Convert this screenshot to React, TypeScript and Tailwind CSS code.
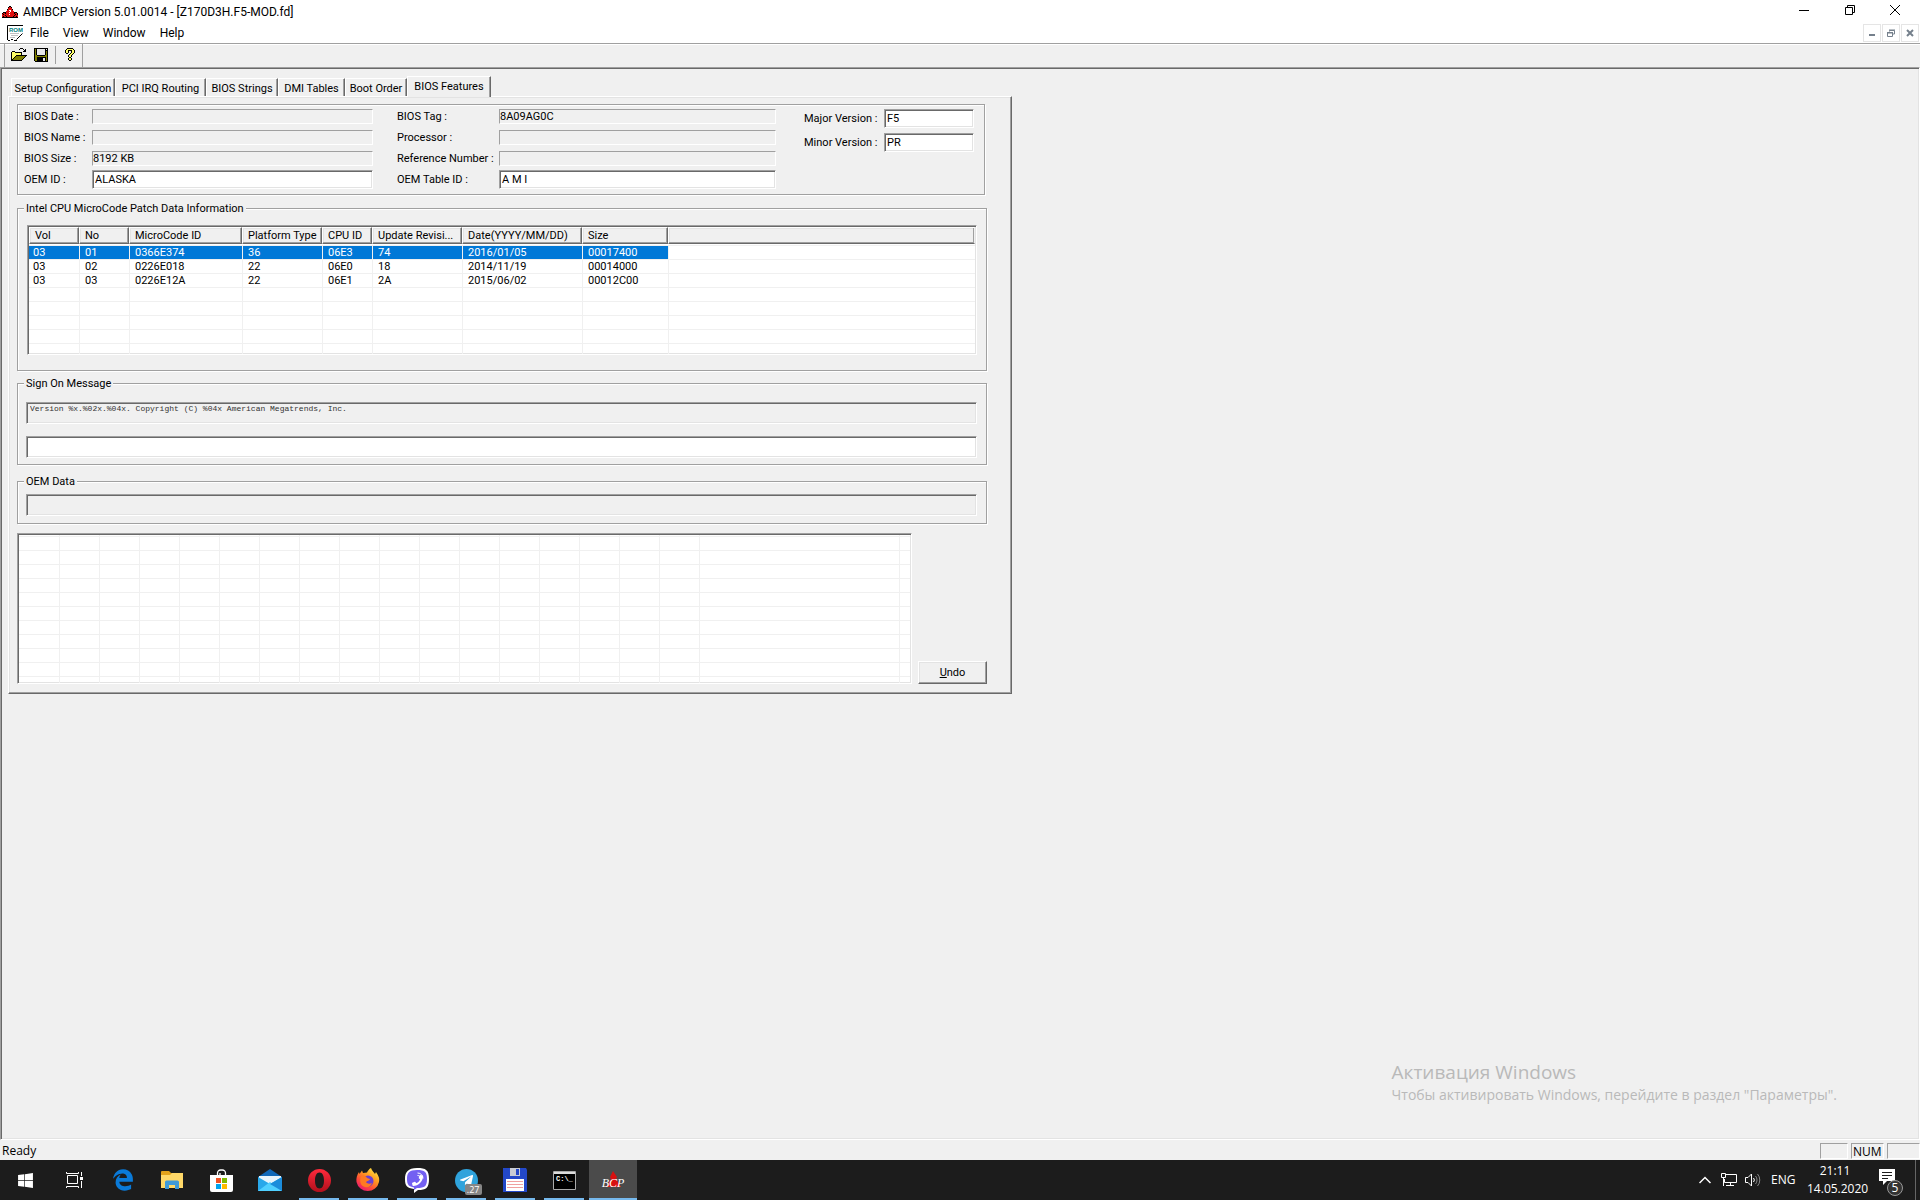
import React, { useState } from 'react';
import { FaEdgeLegacy, FaPhoneAlt, FaTelegramPlane, FaWindows } from 'react-icons/fa';

const sunken =
  'border border-t-[#a0a0a0] border-l-[#a0a0a0] border-r-white border-b-white shadow-[inset_1px_1px_0_#696969,inset_-1px_-1px_0_#e3e3e3]';
const raised =
  'border border-t-white border-l-white border-r-[#696969] border-b-[#696969] shadow-[inset_-1px_-1px_0_#a0a0a0,inset_1px_1px_0_#e3e3e3]';
const etched = 'border border-[#a0a0a0] shadow-[inset_1px_1px_0_#fff,1px_1px_0_#fff]';

const menus = ['File', 'View', 'Window', 'Help'];

const tabs = [
  { label: 'Setup Configuration', width: 'w-[104px]' },
  { label: 'PCI IRQ Routing', width: 'w-[91px]' },
  { label: 'BIOS Strings', width: 'w-[72px]' },
  { label: 'DMI Tables', width: 'w-[67px]' },
  { label: 'Boot Order', width: 'w-[62px]' },
  { label: 'BIOS Features', width: 'w-[84px]' },
];

const columns = [
  { label: 'Vol', width: 'w-[51px]' },
  { label: 'No', width: 'w-[50px]' },
  { label: 'MicroCode ID', width: 'w-[113px]' },
  { label: 'Platform Type', width: 'w-[80px]' },
  { label: 'CPU ID', width: 'w-[50px]' },
  { label: 'Update Revisi...', width: 'w-[90px]' },
  { label: 'Date(YYYY/MM/DD)', width: 'w-[120px]' },
  { label: 'Size', width: 'w-[86px]' },
  { label: '', width: '' },
];

const patches = [
  ['03', '01', '0366E374', '36', '06E3', '74', '2016/01/05', '00017400', ''],
  ['03', '02', '0226E018', '22', '06E0', '18', '2014/11/19', '00014000', ''],
  ['03', '03', '0226E12A', '22', '06E1', '2A', '2015/06/02', '00012C00', ''],
];

const emptyPatch = columns.map(() => '');

const palette: Record<string, string> = {
  X: '#000000',
  Y: '#ffff66',
  O: '#808000',
  G: '#e8e8e8',
  R: '#e01010',
  W: '#ffffff',
};

const openIcon = [
  '.........XXX....',
  '........X...X.X.',
  '.............XX.',
  '.XXX........XXX.',
  'XYYYXXXXXXX.....',
  'XYYYYYYYYYX.....',
  'XYYYYYYYYYX.....',
  'XYYYYXXXXXXXXXXX',
  'XYYYXOOOOOOOOOX.',
  'XYYXOOOOOOOOOX..',
  'XYXOOOOOOOOOX...',
  'XXOOOOOOOOOX....',
  'XXXXXXXXXXX.....',
];

const saveIcon = [
  'XXXXXXXXXXXXXX',
  'XOXGGGGGGGGXGX',
  'XOXGGGGGGGGXXX',
  'XOXGGGGGGGGXOX',
  'XOXGGGGGGGGXOX',
  'XOXGGGGGGGGXOX',
  'XOXGGGGGGGGXOX',
  'XOOXXXXXXXXOOX',
  'XOOOOOOOOOOOOX',
  'XOOXXXXXXXXXOX',
  'XOOXXXXXXGGXOX',
  'XOOXXXXXXGGXOX',
  'XOOXXXXXXGGXOX',
  '.XXXXXXXXXXXXX',
];

const helpIcon = [
  '..XXXXXX..',
  '.XYYYYYYX.',
  'XYYXXXXYYX',
  'XYYX..XYYX',
  'XYYX..XYYX',
  '.XX..XYYX.',
  '....XYYX..',
  '...XYYX...',
  '...XYYX...',
  '....XX....',
  '...XYYX...',
  '...XYYX...',
  '....XX....',
];

const amiIcon = [
  '.......XX.......',
  '......XRRX......',
  '......RRRR......',
  '.....XRRRRX.....',
  '.....RRWWRR.....',
  '....RRRRWRRR....',
  '.XXXRRRWRRRRXXX.',
  'XRRXRRRRRRRRXRRX',
  'RXRRRRRWRRRRRXRX',
  'RRRXRRRRRRRRXRRR',
  'RXRRXRRRRRRXRRXR',
  'XXXXXXXXXXXXXXXX',
];

function PixelIcon({ rows }: { rows: string[] }) {
  return (
    <svg width={rows[0].length} height={rows.length} shapeRendering="crispEdges" aria-hidden="true">
      {rows.map((row, y) =>
        row.split('').map((c, x) => (c === '.' ? null : <rect key={`${x}-${y}`} x={x} y={y} width="1" height="1" fill={palette[c]} />))
      )}
    </svg>
  );
}

function RomIcon() {
  return (
    <svg width="16" height="16" aria-hidden="true">
      <path d="M.5 .5H15.5V9L9 15.5H.5Z" fill="#fff" />
      <path d="M15.5 8.5L9.5 14.5" stroke="#000" fill="none" />
      <path d="M.5 15V.5H16" stroke="#000" fill="none" />
      <path d="M1 15.5h2M4 14.5h2M7 15.5h3" stroke="#000" />
      <path d="M3 8.5h9M4 10.5h7M3 12.5h5" stroke="#c0c0c0" />
      <text x="2" y="7" fontSize="6" fontWeight="bold" fontFamily="Liberation Sans, sans-serif" fill="#008080">ROM</text>
    </svg>
  );
}

function TitleBar() {
  return (
    <header className="bg-white font-[Roboto,sans-serif] text-xs">
      <div className="flex h-6 items-center pl-[2px]">
        <PixelIcon rows={amiIcon} />
        <h1 className="ml-[5px]">AMIBCP Version 5.01.0014 - [Z170D3H.F5-MOD.fd]</h1>
        <div className="ml-auto flex pr-[2px] pb-1">
          <button aria-label="Minimize" className="flex w-[46px] justify-center">
            <svg width="10" height="10" stroke="#000"><path d="M0 5.5h10" /></svg>
          </button>
          <button aria-label="Restore" className="flex w-[45px] justify-center">
            <svg width="10" height="10" fill="none" stroke="#000"><path d="M.5 2.5h7v7h-7zM2.5 2V.5h7v7H8" /></svg>
          </button>
          <button aria-label="Close" className="flex w-[46px] justify-center">
            <svg width="10" height="10" stroke="#000"><path d="M0 0l10 10M10 0L0 10" /></svg>
          </button>
        </div>
      </div>
      <div className="flex h-[19px] items-center pb-[2px] pl-[7px]">
        <RomIcon />
        <nav className="flex">
          {menus.map(m => (
            <button key={m} className="px-[7px]">{m}</button>
          ))}
        </nav>
        <div className="ml-auto flex gap-px pr-px">
          <button aria-label="Minimize document" className="flex h-[18px] w-[18px] items-center justify-center border border-[#e5e5e5]">
            <svg width="8" height="8"><path d="M1 6h6" stroke="#75808c" strokeWidth="2" /></svg>
          </button>
          <button aria-label="Restore document" className="flex h-[18px] w-[18px] items-center justify-center border border-[#e5e5e5]">
            <svg width="8" height="8" fill="none" stroke="#75808c"><path d="M.5 4h5v3.5h-5zM0 3.5h6M2.5 2.5v-1h5v3.5H6M2 1h6" /></svg>
          </button>
          <button aria-label="Close document" className="flex h-[18px] w-[18px] items-center justify-center border border-[#e5e5e5]">
            <svg width="8" height="8" stroke="#75808c" strokeWidth="2"><path d="M1 1l6 6M7 1L1 7" /></svg>
          </button>
        </div>
      </div>
    </header>
  );
}

function Toolbar() {
  return (
    <div className="border-t border-[#a0a0a0] shadow-[inset_0_1px_0_#fff]">
      <div className="ml-1 flex h-[23px] w-[79px] items-center border-x border-[#a0a0a0] pb-[2px] pl-[6px]">
        <button aria-label="Open"><PixelIcon rows={openIcon} /></button>
        <button aria-label="Save" className="ml-[7px]"><PixelIcon rows={saveIcon} /></button>
        <span className="ml-[7px] h-[18px] w-px bg-[#a0a0a0]" />
        <button aria-label="Help" className="ml-[9px]"><PixelIcon rows={helpIcon} /></button>
      </div>
    </div>
  );
}

interface FieldProps {
  id: string;
  label: string;
  value?: string;
  editable?: boolean;
  row?: string;
  labelWidth: string;
  width: string;
}

function Field({ id, label, value = '', editable = false, row = 'h-[21px]', labelWidth, width }: FieldProps) {
  return (
    <div className={`flex items-center ${row}`}>
      <label htmlFor={id} className={`shrink-0 whitespace-nowrap ${labelWidth}`}>{label}</label>
      {editable ? (
        <input id={id} defaultValue={value} className={`h-[19px] bg-white pl-[2px] outline-none ${width} ${sunken}`} />
      ) : (
        <input
          id={id}
          value={value}
          readOnly
          className={`h-[15px] border border-t-[#a0a0a0] border-l-[#a0a0a0] border-r-white border-b-white bg-transparent outline-none ${width}`}
        />
      )}
    </div>
  );
}

function BiosInfo() {
  return (
    <section className={`mr-[2px] flex pt-px pb-1 pl-[6px] ${etched}`}>
      <div>
        <Field id="bios-date" label="BIOS Date :" labelWidth="w-[68px]" width="w-[281px]" />
        <Field id="bios-name" label="BIOS Name :" labelWidth="w-[68px]" width="w-[281px]" />
        <Field id="bios-size" label="BIOS Size :" value="8192 KB" labelWidth="w-[68px]" width="w-[281px]" />
        <Field id="oem-id" label="OEM ID :" value="ALASKA" editable labelWidth="w-[68px]" width="w-[281px]" />
      </div>
      <div className="ml-6">
        <Field id="bios-tag" label="BIOS Tag :" value="8A09AG0C" labelWidth="w-[102px]" width="w-[277px]" />
        <Field id="processor" label="Processor :" labelWidth="w-[102px]" width="w-[277px]" />
        <Field id="reference" label="Reference Number :" labelWidth="w-[102px]" width="w-[277px]" />
        <Field id="oem-table" label="OEM Table ID :" value="A M I" editable labelWidth="w-[102px]" width="w-[277px]" />
      </div>
      <div className="ml-7">
        <Field id="major" label="Major Version :" value="F5" editable row="h-6" labelWidth="w-20" width="w-[90px]" />
        <Field id="minor" label="Minor Version :" value="PR" editable row="h-6" labelWidth="w-20" width="w-[90px]" />
      </div>
    </section>
  );
}

function Group({ title, className, children }: { title: string; className: string; children: React.ReactNode }) {
  return (
    <fieldset className={`min-w-0 ${etched}`}>
      <legend className="ml-[6px] bg-[#f0f0f0] px-[2px] leading-[13px]">{title}</legend>
      <div className={`pr-[9px] ${className}`}>{children}</div>
    </fieldset>
  );
}

function PatchTable() {
  const [selected, setSelected] = useState(0);
  const rows = [...patches, ...Array(5).fill(emptyPatch)];

  return (
    <div className={`h-[130px] overflow-hidden bg-white p-px ${sunken}`}>
      <table className="w-full table-fixed border-separate border-spacing-0">
        <thead>
          <tr>
            {columns.map((c, i) => (
              <th key={i} className={`h-[19px] border-b border-[#f0f0f0] p-0 pb-px text-left font-normal ${c.width}`}>
                <div
                  className={`h-[17px] overflow-hidden bg-[#f0f0f0] pl-[5px] leading-[16px] whitespace-nowrap ${raised} ${
                    c.label ? 'mr-px' : 'border-r-[#f0f0f0]'
                  } ${i > 0 ? '-ml-px' : ''}`}
                >
                  {c.label}
                </div>
              </th>
            ))}
          </tr>
        </thead>
        <tbody>
          {rows.map((r: string[], y) => (
            <tr key={y} onClick={() => y < patches.length && setSelected(y)}>
              {r.map((cell, x) => (
                <td
                  key={x}
                  className={`h-[14px] border-b border-[#f0f0f0] py-0 pr-0 leading-[13px] ${x === 0 ? 'pl-1' : 'pl-[5px]'} ${
                    x < 8 ? 'border-r' : ''
                  } ${y === selected && x < 8 ? 'bg-[#0078d7] bg-clip-padding text-white' : ''}`}
                >
                  {cell}
                </td>
              ))}
            </tr>
          ))}
        </tbody>
      </table>
    </div>
  );
}

function DataGrid() {
  return (
    <div className={`h-[151px] w-[895px] overflow-hidden bg-white p-px ${sunken}`}>
      <table className="w-full table-fixed border-separate border-spacing-0" aria-label="OEM data bytes">
        <thead>
          <tr>
            <th className="h-[2px] w-[41px] border-r border-b border-[#f0f0f0] p-0" />
            {Array.from({ length: 16 }, (_, i) => (
              <th key={i} className="w-10 border-r border-b border-[#f0f0f0] p-0" />
            ))}
            <th className="w-[200px] border-r border-b border-[#f0f0f0] p-0" />
            <th className="border-b border-[#f0f0f0] p-0" />
          </tr>
        </thead>
        <tbody>
          {Array.from({ length: 11 }, (_, y) => (
            <tr key={y}>
              {Array.from({ length: 19 }, (_, x) => (
                <td key={x} className={`h-[14px] border-b border-[#f0f0f0] p-0 ${x < 18 ? 'border-r' : ''}`} />
              ))}
            </tr>
          ))}
        </tbody>
      </table>
    </div>
  );
}

function Document() {
  const [active, setActive] = useState('BIOS Features');

  return (
    <main className="relative flex-1 border border-t-[#a0a0a0] border-l-[#a0a0a0] border-r-white border-b-white pt-2 pl-[7px] font-[Roboto,sans-serif] text-[11px] leading-[13px] shadow-[inset_1px_1px_0_#696969,inset_-1px_-1px_0_#e3e3e3]">
      <div className="flex h-5 items-end pl-[3px]" role="tablist">
        {tabs.map(t => (
          <button
            key={t.label}
            role="tab"
            aria-selected={t.label === active}
            onClick={() => setActive(t.label)}
            className={`border-t border-r border-l border-t-white border-r-[#696969] border-l-white whitespace-nowrap shadow-[inset_-1px_0_0_#a0a0a0] ${t.width} ${
              t.label === active ? 'z-10 -mb-px h-[21px] bg-[#f0f0f0] pb-px' : 'h-[18px] pt-px'
            }`}
          >
            {t.label}
          </button>
        ))}
      </div>
      <div className={`w-[1004px] pt-[7px] pr-6 pb-[9px] pl-2 ${raised}`}>
        <BiosInfo />
        <div className="mt-[7px]">
          <Group title="Intel CPU MicroCode Patch Data Information" className="pt-[10px] pb-[15px] pl-[9px]">
            <PatchTable />
          </Group>
        </div>
        <div className="mt-[6px]">
          <Group title="Sign On Message" className="flex flex-col gap-3 pt-3 pb-[6px] pl-2">
            <input
              aria-label="Current sign on message"
              readOnly
              value="Version %x.%02x.%04x. Copyright (C) %04x American Megatrends, Inc."
              className={`h-[22px] w-full bg-transparent pb-[9px] pl-[3px] font-['Liberation_Mono',monospace] text-[8px] text-[#333] outline-none ${sunken}`}
            />
            <input aria-label="New sign on message" className={`h-[22px] w-full bg-white px-1 outline-none ${sunken}`} />
          </Group>
        </div>
        <div className="mt-[10px]">
          <Group title="OEM Data" className="pt-[6px] pb-[7px] pl-2">
            <input aria-label="OEM data" readOnly className={`block h-[22px] w-full bg-transparent px-1 outline-none ${sunken}`} />
          </Group>
        </div>
        <div className="mt-[9px] flex items-end justify-between">
          <DataGrid />
          <button className={`h-[23px] w-[69px] ${raised}`}>
            <span className="underline">U</span>ndo
          </button>
        </div>
      </div>
      <div className="absolute right-[82px] bottom-[34px] font-['Open_Sans',sans-serif] text-[#b9b9b9]">
        <p className="text-[19px] leading-[26px]">Активация Windows</p>
        <p className="text-[14px] leading-5">Чтобы активировать Windows, перейдите в раздел "Параметры".</p>
      </div>
    </main>
  );
}

function StatusBar() {
  return (
    <footer className="flex h-5 items-center gap-[3px] pt-px pl-[2px] font-['Open_Sans',sans-serif] text-xs">
      <span className="mr-auto">Ready</span>
      <span className="h-4 w-7 border border-t-[#a0a0a0] border-l-[#a0a0a0] border-r-white border-b-white" />
      <span className="h-4 w-[33px] border border-t-[#a0a0a0] border-l-[#a0a0a0] border-r-white border-b-white pl-px leading-[15px]">NUM</span>
      <span className="h-4 w-[33px] border border-t-[#a0a0a0] border-l-[#a0a0a0] border-r-white border-b-white" />
    </footer>
  );
}

const TaskViewIcon = () => (
  <svg width="17" height="16" fill="none" stroke="#fff">
    <path d="M1.5 3.5h10v8h-10zM.5 0v1.5h12V0M.5 16v-1.5h12V16M15.5 0v4M15.5 9v7" />
    <path d="M14 5h3v3h-3z" fill="#fff" stroke="none" />
  </svg>
);

const ExplorerIcon = () => (
  <svg width="22" height="18">
    <path d="M0 1a1 1 0 0 1 1-1h7l2 2h12v15H0z" fill="#e3a21a" />
    <path d="M0 4h9l2-2h11v15H0z" fill="#ffd868" />
    <path d="M4 18v-7a1.500 1.500 0 0 1 1.500-1.500h11A1.500 1.500 0 0 1 18 11v7h-4v-4H8v4z" fill="#3e9ad8" />
  </svg>
);

const StoreIcon = () => (
  <svg width="23" height="23">
    <path d="M7.500 7V4a3 3 0 0 1 3-3h2a3 3 0 0 1 3 3v3M10 6V4" fill="none" stroke="#fff" strokeWidth="1.300" />
    <path d="M0 6h23v15a2 2 0 0 1-2 2H2a2 2 0 0 1-2-2z" fill="#fff" />
    <path d="M6 9h5v5H6z" fill="#f25022" />
    <path d="M12 9h5v5h-5z" fill="#7fba00" />
    <path d="M6 15h5v5H6z" fill="#00a4ef" />
    <path d="M12 15h5v5h-5z" fill="#ffb900" />
  </svg>
);

const MailIcon = () => (
  <svg width="24" height="22">
    <path d="M0 8L12 0l12 8v3H0z" fill="#1068b8" />
    <path d="M1 7h22v8H1z" fill="#e8f4fc" />
    <path d="M0 8l12 7 12-7v14H0z" fill="#29a8ea" />
    <path d="M0 22L12 13l12 9z" fill="#50d0ff" />
    <path d="M24 8v14L12 15z" fill="#1b8cdb" />
  </svg>
);

const OperaIcon = () => (
  <svg width="23" height="23">
    <defs>
      <linearGradient id="opera" x1="0" y1="0" x2="0" y2="1">
        <stop offset="0" stopColor="#ff2a3c" />
        <stop offset="1" stopColor="#b0101c" />
      </linearGradient>
    </defs>
    <path fillRule="evenodd" fill="url(#opera)" d="M11.500 0a11.500 11.500 0 1 0 0 23a11.500 11.500 0 1 0 0-23zM11.500 3.500c3 0 4.500 3.500 4.500 8s-1.500 8-4.500 8s-4.500-3.500-4.500-8s1.500-8 4.500-8z" />
  </svg>
);

const FirefoxIcon = () => (
  <svg width="24" height="24">
    <defs>
      <linearGradient id="fox" x1="0.900" y1="0" x2="0.200" y2="1">
        <stop offset="0" stopColor="#fff14a" />
        <stop offset="0.400" stopColor="#ff9a1f" />
        <stop offset="0.700" stopColor="#ff4b37" />
        <stop offset="1" stopColor="#e5127d" />
      </linearGradient>
    </defs>
    <path fill="url(#fox)" d="M15 0c1 3 3 4 4 6l1-2c2 3 4 6 3 10A11.500 11.500 0 0 1 .500 14C0 10 1 7 3 4l.500 2L6 2.500l1 2.500 4-.500c1-2 2-3.500 4-4.500z" />
    <circle cx="12" cy="13" r="5.500" fill="#6a3fd0" />
    <path d="M5 8c3-1 5 0 6 2l3 1c0 1.500-3 2-4 3 1 2 4 2 6 1-1 3-4 5-7 4-4-1-6-5-4-11z" fill="#ff7a22" />
  </svg>
);

const ViberIcon = () => (
  <span className="relative flex items-center justify-center">
    <svg width="24" height="25">
      <path d="M12 0c9 0 12 2 12 11s-3 11-11 11l-4 3v-4C2 20 0 18 0 11S3 0 12 0z" fill="#fff" />
      <path d="M12 2c8 0 10 2 10 9s-2 9-10 9l-3 2v-2.500C4 18.500 2 17 2 11s2-9 10-9z" fill="#7360f2" />
      <path d="M12.500 5c3.500 0 5.500 2.500 5.500 5.500M12.500 7.500c2 0 3 1 3 3" fill="none" stroke="#fff" />
    </svg>
    <FaPhoneAlt className="absolute h-[11px] w-[11px] -scale-x-100 text-white" />
  </span>
);

const TelegramIcon = () => (
  <span className="relative flex h-[23px] w-[23px] items-center justify-center rounded-full bg-[#2fa3dc]">
    <FaTelegramPlane className="h-[15px] w-[15px] text-white" />
    <span className="absolute -right-1 -bottom-[3px] h-[11px] rounded-[2px] bg-[#868686] px-[2px] text-[9px] leading-[11px] text-white">.27</span>
  </span>
);

const FloppyIcon = () => (
  <svg width="24" height="24">
    <path d="M0 0h23l1 2v22H0z" fill="#2348c8" />
    <path d="M7 0h10v8H7z" fill="#c8ccd4" />
    <path d="M13 1h3v6h-3z" fill="#2348c8" />
    <path d="M3 11h18v12H3z" fill="#fff" />
    <path d="M4 13.500h16M4 16.500h16M4 19.500h16" stroke="#f0a0a0" />
  </svg>
);

const ConsoleIcon = () => (
  <svg width="23" height="19">
    <path d="M.5 .5h22v18H.5z" fill="#000" stroke="#aaa" />
    <path d="M1 1h21v2H1z" fill="#ddd" />
    <text x="3" y="10" fontSize="7" fontWeight="bold" fontFamily="Liberation Mono, monospace" fill="#fff">C:\_</text>
  </svg>
);

const BcpIcon = () => (
  <svg width="26" height="20">
    <path d="M13 1l4 6-1 2 5 8H6l5-8-1-2z" fill="#d81010" />
    <text x="13" y="17" textAnchor="middle" fontSize="12" fontStyle="italic" fontFamily="Liberation Serif, serif" fill="#fff">BCP</text>
  </svg>
);

const apps = [
  { name: 'Start', icon: <FaWindows className="h-[17px] w-[17px] text-white" /> },
  { name: 'Task View', icon: <TaskViewIcon /> },
  { name: 'Microsoft Edge', icon: <FaEdgeLegacy className="h-[22px] w-[22px] text-[#0a7ad8]" /> },
  { name: 'File Explorer', icon: <ExplorerIcon /> },
  { name: 'Microsoft Store', icon: <StoreIcon /> },
  { name: 'Mail', icon: <MailIcon /> },
  { name: 'Opera', icon: <OperaIcon />, running: true },
  { name: 'Firefox', icon: <FirefoxIcon />, running: true },
  { name: 'Viber', icon: <ViberIcon />, running: true },
  { name: 'Telegram', icon: <TelegramIcon />, running: true },
  { name: 'Total Commander', icon: <FloppyIcon />, running: true },
  { name: 'Command Prompt', icon: <ConsoleIcon />, running: true },
  { name: 'AMIBCP', icon: <BcpIcon />, running: true, focused: true },
];

function Taskbar() {
  return (
    <div className="flex h-10 bg-[#1c1c1c] font-['Open_Sans',sans-serif] text-xs text-white">
      <div className="flex gap-px pl-px">
        {apps.map(a => (
          <button key={a.name} aria-label={a.name} className={`relative flex w-12 items-center justify-center ${a.focused ? 'bg-[#4b4b4b]' : ''}`}>
            {a.icon}
            {a.running && <span className={`absolute bottom-0 h-[2px] bg-[#76b9ed] ${a.focused ? 'inset-x-0' : 'inset-x-1'}`} />}
          </button>
        ))}
      </div>
      <div className="ml-auto flex items-center pr-1">
        <button aria-label="Show hidden icons">
          <svg width="12" height="8" fill="none" stroke="#fff" strokeWidth="1.500"><path d="M.5 7L6 1.500 11.500 7" /></svg>
        </button>
        <svg width="16" height="14" fill="none" stroke="#fff" className="ml-[10px]">
          <path d="M4 1.500h11.500v8H3.500V6M.5 .5h4v4h-4zM2.500 4.500V13M9.500 9.500v3M5 12.500h8" />
        </svg>
        <svg width="16" height="14" fill="none" stroke="#fff" className="ml-2">
          <path d="M.5 4.500h2.500l3.500-3.500v12L3 9.500H.5zM8.500 5a3 3 0 0 1 0 4" />
          <path d="M10.500 3a6 6 0 0 1 0 8M12.500 1a9 9 0 0 1 0 12" stroke="#888" />
        </svg>
        <span className="ml-[10px] w-6">ENG</span>
        <time className="ml-3 w-[56px] text-center leading-[18px] whitespace-nowrap">
          21:11
          <br />
          14.05.2020
        </time>
        <button aria-label="Notifications" className="relative ml-4 flex h-6 w-6 items-start">
          <svg width="16" height="18">
            <path d="M0 1h16v12H8l-4 4v-4H0z" fill="#fff" />
            <path d="M3 4.500h10M3 7.500h10M3 10.500h6" stroke="#1c1c1c" />
          </svg>
          <span className="absolute right-0 -bottom-1 h-4 w-4 rounded-full border border-[#999] bg-[#333] text-center text-xs leading-[14px]">5</span>
        </button>
        <span className="ml-3 h-10 w-px bg-[#666]" />
      </div>
    </div>
  );
}

export default function App() {
  return (
    <div className="flex min-h-screen flex-col bg-[#f0f0f0] font-['Liberation_Sans',Arial,sans-serif] text-black">
      <TitleBar />
      <Toolbar />
      <Document />
      <StatusBar />
      <Taskbar />
    </div>
  );
}
